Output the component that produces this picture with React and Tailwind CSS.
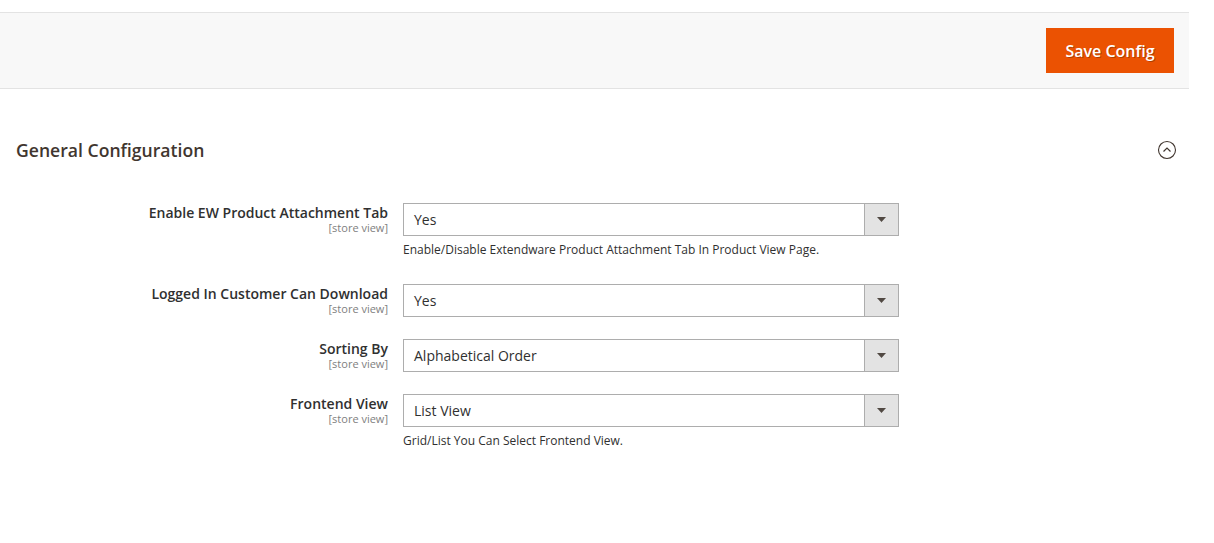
import React from "react";

const rows = [
  {
    label: "Enable EW Product Attachment Tab",
    value: "Yes",
    note: "Enable/Disable Extendware Product Attachment Tab In Product View Page.",
  },
  { label: "Logged In Customer Can Download", value: "Yes" },
  { label: "Sorting By", value: "Alphabetical Order" },
  {
    label: "Frontend View",
    value: "List View",
    note: "Grid/List You Can Select Frontend View.",
  },
];

function Row({ label, value, note }) {
  return (
    <div className="flex items-start">
      <div className="w-[388px] text-right pt-[1px] shrink-0">
        <div className="text-[14px] leading-[18px] font-semibold text-[#303030]">
          {label}
        </div>
        <div className="text-[11px] leading-[12px] text-[#808080]">
          [store view]
        </div>
      </div>
      <div className="ml-[15px] w-[496px]">
        <div className="flex h-[33px] border border-[#adadad] bg-white">
          <div className="flex-1 flex items-center px-[10px] text-[14px] text-[#303030]">
            {value}
          </div>
          <div className="w-[34px] bg-[#e3e3e3] border-l border-[#adadad] flex items-center justify-center">
            <svg width="9" height="5" viewBox="0 0 9 5">
              <path d="M0 0h9L4.5 5z" fill="#514943" />
            </svg>
          </div>
        </div>
        {note && (
          <div className="mt-[6px] text-[12px] leading-[16px] text-[#303030]">
            {note}
          </div>
        )}
      </div>
    </div>
  );
}

export default function App() {
  return (
    <div
      className="w-[1214px] h-[543px] bg-white overflow-hidden"
      style={{ fontFamily: '"Open Sans", sans-serif' }}
    >
      {/* Page actions */}
      <div className="mt-[12px] w-[1189px] h-[77px] bg-[#f8f8f8] border-y border-[#e3e3e3] flex items-start justify-end pr-[15px] pt-[15px]">
        <button
          className="w-[128px] h-[45px] bg-[#eb5202] text-white text-[16px] font-semibold"
          style={{ textShadow: "1px 1px 0 rgba(0,0,0,0.25)" }}
        >
          Save Config
        </button>
      </div>

      {/* Section */}
      <div className="flex items-center justify-between pl-[16px] pr-[37px] mt-[50px]">
        <h2 className="text-[17.6px] leading-[22px] font-semibold text-[#41362f]">
          General Configuration
        </h2>
        <svg width="20" height="20" viewBox="0 0 20 20">
          <circle cx="10" cy="10" r="8.5" fill="none" stroke="#41362f" strokeWidth="1.1" />
          <path d="M6.5 11.5 10 8l3.5 3.5" fill="none" stroke="#41362f" strokeWidth="1.2" />
        </svg>
      </div>

      <div className="mt-[42px] flex flex-col">
        <div>
          <Row {...rows[0]} />
        </div>
        <div className="mt-[26px]">
          <Row {...rows[1]} />
        </div>
        <div className="mt-[22px]">
          <Row {...rows[2]} />
        </div>
        <div className="mt-[22px]">
          <Row {...rows[3]} />
        </div>
      </div>
    </div>
  );
}
